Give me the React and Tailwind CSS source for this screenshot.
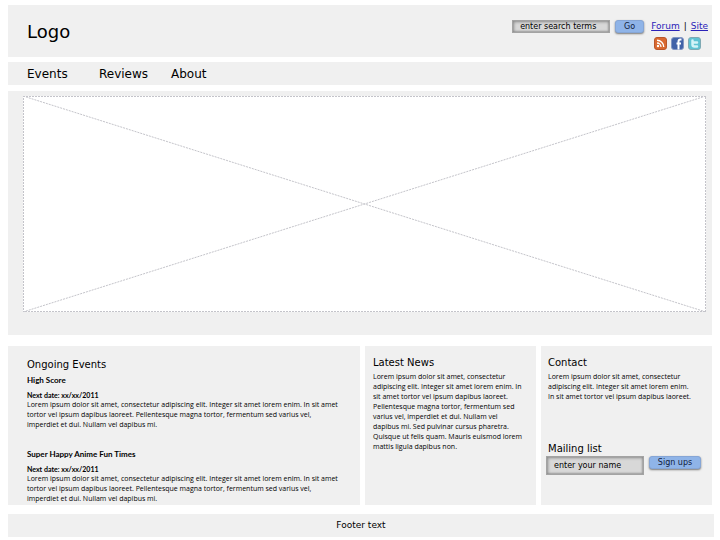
import clsx from 'clsx';

const navItems = [
  { label: 'Events', width: 'w-[72px]' },
  { label: 'Reviews', width: 'w-[72px]' },
  { label: 'About', width: '' },
];

const events = [
  { title: 'High Score', date: 'xx/xx/2011' },
  { title: 'Super Happy Anime Fun Times', date: 'xx/xx/2011' },
];

const inputStyle =
  'border border-[#a3a3a3] bg-[#d8d8d8] pl-[7px] pr-1 text-[8px] text-black placeholder:text-black placeholder:opacity-100 shadow-[inset_1px_1px_3px_#8a8a8a,inset_-1px_-1px_2px_#a0a0a0] outline-none';

const buttonStyle =
  'rounded-[3px] border border-[#86a6d6] bg-[#8fb4e8] pt-px text-[8px] text-[#10203c] shadow-[0_1px_2px_#777] leading-[10px]';

const bodyText = "font-['Open_Sans',sans-serif] text-[7px] leading-[10px]";

function RssIcon() {
  return (
    <svg viewBox="0 0 26 26" className="size-[13px]" aria-hidden="true">
      <rect x="1" y="1" width="24" height="24" rx="5" fill="#d9692f" stroke="#b9562a" strokeWidth="2" />
      <circle cx="8" cy="18" r="2.4" fill="#fff" />
      <path d="M6 12a8 8 0 0 1 8 8M6 6.500a13.500 13.500 0 0 1 13.500 13.500" fill="none" stroke="#fff" strokeWidth="2.6" />
    </svg>
  );
}

function FacebookIcon() {
  return (
    <svg viewBox="0 0 26 26" className="size-[13px]" aria-hidden="true">
      <rect x="1" y="1" width="24" height="24" rx="5" fill="#4162a8" stroke="#8195c2" strokeWidth="2" />
      <path d="M21 5h-2c-3 0-4 2-4 4v16M11 13h9" fill="none" stroke="#fff" strokeWidth="4" />
    </svg>
  );
}

function TwitterIcon() {
  return (
    <svg viewBox="0 0 26 26" className="size-[13px]" aria-hidden="true">
      <rect x="1" y="1" width="24" height="24" rx="5" fill="#5fc3d3" stroke="#7fa9b3" strokeWidth="2" />
      <path d="M9 7v8q0 4 4 4h5M9 11h9" fill="none" stroke="#d3f4f8" strokeWidth="5" strokeLinecap="round" strokeLinejoin="round" />
    </svg>
  );
}

function Header() {
  return (
    <header className="mr-0.5 flex h-[52px] items-start justify-between bg-[#f0f0f0] pl-[19px] pr-1">
      <h1 className="pt-[15px] text-[18px] leading-6">Logo</h1>
      <div className="flex flex-col items-end gap-1 pt-[14px]">
        <div className="flex items-center">
          <form className="flex items-center gap-[5px]" onSubmit={(e) => e.preventDefault()}>
            <input type="text" aria-label="Search" placeholder="enter search terms" className={clsx(inputStyle, 'h-[13px] w-[98px]')} />
            <button type="submit" className={clsx(buttonStyle, 'h-[13px] w-[29px]')}>Go</button>
          </form>
          <div className="flex gap-1 pl-[7px] text-[9px] leading-[14px]">
            <a href="#forum" className="text-[#2a22b8] underline">Forum</a>
            <span>|</span>
            <a href="#site" className="text-[#2a22b8] underline">Site</a>
          </div>
        </div>
        <div className="flex gap-1 pr-[7px]">
          <a href="#rss" aria-label="RSS"><RssIcon /></a>
          <a href="#facebook" aria-label="Facebook"><FacebookIcon /></a>
          <a href="#twitter" aria-label="Twitter"><TwitterIcon /></a>
        </div>
      </div>
    </header>
  );
}

function Hero() {
  return (
    <section className="mr-0.5 mt-1.5 bg-[#f0f0f0] pb-[23px] pl-[15px] pr-1.5 pt-[5px]">
      <svg className="block h-[216px] w-full bg-white" role="img" aria-label="Banner placeholder">
        <g fill="none" stroke="#c4c4ca" strokeWidth="1">
          <line x1="0" y1="0" x2="100%" y2="100%" strokeDasharray="2 1" />
          <line x1="0" y1="100%" x2="100%" y2="0" strokeDasharray="2 1" />
          <rect width="100%" height="100%" strokeWidth="2" strokeDasharray="2 1" />
        </g>
      </svg>
    </section>
  );
}

function EventItem({ title, date }) {
  return (
    <article className="h-[74px]">
      <h3 className="font-[Lato,sans-serif] text-[8px] font-bold leading-[10px]">{title}</h3>
      <p className="mt-[5px] font-[Lato,sans-serif] text-[7px] font-bold leading-[10px]">Next date: {date}</p>
      <p className={bodyText}>
        Lorem ipsum dolor sit amet, consectetur adipiscing elit. Integer sit amet lorem enim. In sit amet
        <br />
        tortor vel ipsum dapibus laoreet. Pellentesque magna tortor, fermentum sed varius vel,
        <br />
        imperdiet et dui. Nullam vel dapibus mi.
      </p>
    </article>
  );
}

export default function App() {
  return (
    <div className="bg-white pb-[3px] pl-2 pr-1.5 pt-[5px] font-['DejaVu_Sans',sans-serif] text-black">
      <Header />

      <nav className="mr-0.5 mt-[5px] flex h-[23px] items-center bg-[#f0f0f0] pl-[19px] text-[12px] leading-4">
        {navItems.map((item) => (
          <a key={item.label} href={`#${item.label.toLowerCase()}`} className={item.width}>
            {item.label}
          </a>
        ))}
      </nav>

      <Hero />

      <main className="mr-0.5 mt-[11px] grid min-h-[159px] grid-cols-[352fr_171fr_171fr] gap-x-[5px]">
        <section className="bg-[#f0f0f0] pl-[19px] pr-3 pt-3">
          <h2 className="text-[10px] leading-[14px]">Ongoing Events</h2>
          <div className="mt-[3px] h-[130px]">
            {events.map((event) => (
              <EventItem key={event.title} {...event} />
            ))}
          </div>
        </section>

        <section className="bg-[#f0f0f0] pl-2 pr-1 pt-2.5">
          <h2 className="text-[10px] leading-[14px]">Latest News</h2>
          <p className={clsx(bodyText, 'mt-0.5')}>
            Lorem ipsum dolor sit amet, consectetur
            <br />
            adipiscing elit. Integer sit amet lorem enim. In
            <br />
            sit amet tortor vel ipsum dapibus laoreet.
            <br />
            Pellentesque magna tortor, fermentum sed
            <br />
            varius vel, imperdiet et dui. Nullam vel
            <br />
            dapibus mi. Sed pulvinar cursus pharetra.
            <br />
            Quisque ut felis quam. Mauris euismod lorem
            <br />
            mattis ligula dapibus non.
          </p>
        </section>

        <section className="bg-[#f0f0f0] pl-[7px] pr-1 pt-2.5">
          <h2 className="text-[10px] leading-[14px]">Contact</h2>
          <p className={clsx(bodyText, 'mt-0.5')}>
            Lorem ipsum dolor sit amet, consectetur
            <br />
            adipiscing elit. Integer sit amet lorem enim.
            <br />
            In sit amet tortor vel ipsum dapibus laoreet.
          </p>
          <form className="mt-10" onSubmit={(e) => e.preventDefault()}>
            <label htmlFor="name" className="block text-[10px] leading-[14px]">Mailing list</label>
            <div className="-ml-0.5 flex items-start gap-[5px]">
              <input id="name" type="text" placeholder="enter your name" className={clsx(inputStyle, 'h-[19px] w-[98px]')} />
              <button type="submit" className={clsx(buttonStyle, 'h-[13px] w-[52px]')}>Sign ups</button>
            </div>
          </form>
        </section>
      </main>

      <footer className="mt-[9px] flex h-[23px] items-center justify-center bg-[#f0f0f0] text-[9px]">
        Footer text
      </footer>
    </div>
  );
}
